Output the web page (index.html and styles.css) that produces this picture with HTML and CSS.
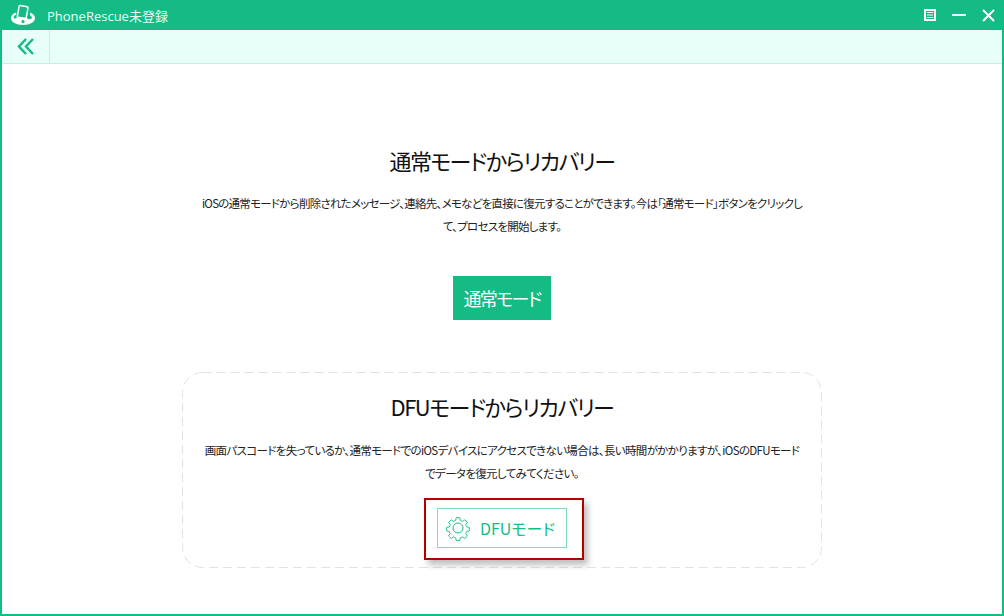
FILE: index.html
```html
<!DOCTYPE html>
<html lang="ja">
<head>
    <meta charset="UTF-8">
    <meta name="viewport" content="width=device-width, initial-scale=1.0">
    <title>PhoneRescue</title>
    <link rel="stylesheet" href="styles.css">
</head>
<body>
    <div class="window">
        <div class="titlebar">
            <div class="brand">
                <svg class="logo" width="26" height="24" viewBox="0 0 26 24">
                    <path fill="#fff" d="M6 9.500C2.800 10.600 1 12.500 1 15c0 4 5 7 12 7s12-3 12-7c0-2.600-2-4.600-5.200-5.600l.5 3.100c1 .6 1.600 1.400 1.600 2.300 0 .7-1 1.500-2.500 1.500s-2.400-.8-2.400-1.600L8 13.500c-.5 1.200-1.500 2-2.700 2-1 0-1.700-.5-1.700-1.300 0-1 1-2 2.900-2.500z"/>
                    <circle cx="13" cy="18.500" r="1.600" fill="#14bb85"/>
                    <rect x="8.200" y="3" width="9" height="13" rx="1" fill="none" stroke="#fff" stroke-width="1.500" transform="rotate(10 13 9)"/>
                </svg>
                <span class="app-name">PhoneRescue未登録</span>
            </div>
            <div class="win-controls">
                <svg width="12" height="12" viewBox="0 0 12 12"><path fill="none" stroke="#fff" stroke-width="2" d="M1 1h10v10H1z"/><path stroke="#fff" d="M3 3.500h6M3 6h6M3 8.500h6"/></svg>
                <svg width="14" height="12" viewBox="0 0 14 12"><path stroke="#fff" stroke-width="2" d="M0 6h14"/></svg>
                <svg width="13" height="13" viewBox="0 0 13 13"><path stroke="#fff" stroke-width="2" d="M1 1l11 11M12 1L1 12"/></svg>
            </div>
        </div>
        <div class="toolbar">
            <div class="back">
                <svg width="18" height="17" viewBox="0 0 18 17"><path fill="none" stroke="#14bb85" stroke-width="2.500" d="M9 1L2 8.500 9 16M16 1L9 8.500 16 16"/></svg>
            </div>
        </div>
        <div class="content">
            <section class="mode normal">
                <h2>通常モードからリカバリー</h2>
                <p>iOSの通常モードから削除されたメッセージ、連絡先、メモなどを直接に復元することができます。今は「通常モード」ボタンをクリックし<br>て、プロセスを開始します。</p>
                <button class="btn-primary">通常モード</button>
            </section>
            <section class="mode dfu">
                <h2>DFUモードからリカバリー</h2>
                <p>画面パスコードを失っているか、通常モードでのiOSデバイスにアクセスできない場合は、長い時間がかかりますが、iOSのDFUモード<br>でデータを復元してみてください。</p>
                <div class="highlight">
                    <button class="btn-outline">
                        <svg width="26" height="26" viewBox="0 0 26 26"><path fill="none" stroke="#14bb85" d="M11 1.500h4l.6 3.200 2.300 1 2.700-1.800 2.800 2.800-1.800 2.700 1 2.300 3 .6v4l-3 .6-1 2.300 1.800 2.700-2.800 2.800-2.700-1.800-2.300 1-.6 3h-4l-.6-3-2.300-1-2.700 1.800-2.800-2.800 1.800-2.700-1-2.300-3-.6v-4l3-.6 1-2.300-1.800-2.700 2.800-2.800 2.700 1.800 2.300-1z" transform="translate(1.300 1.300) scale(.9)"/><circle cx="13" cy="13" r="5" fill="none" stroke="#14bb85"/></svg>
                        <span>DFUモード</span>
                    </button>
                </div>
            </section>
        </div>
    </div>
</body>
</html>
```

FILE: styles.css
```css
/* page */
html, body {
    margin: 0;
    height: 100%;
    overflow: hidden;
}
body {
    font-family: "Noto Sans CJK JP", "Noto Sans", sans-serif;
    font-feature-settings: "palt";
    background: #fff;
    color: #222;
}

.window {
    box-sizing: border-box;
    width: 1004px;
    height: 616px;
    border: 2px solid #14bb85;
    border-top: none;
    display: flex;
    flex-direction: column;
}

/* title bar */
.titlebar {
    height: 30px;
    margin: 0 -2px;
    padding: 0 9px 0 10px;
    background: #14bb85;
    display: flex;
    align-items: center;
    justify-content: space-between;
    flex-shrink: 0;
}
.brand { display: flex; align-items: center; }
.logo { margin-right: 11px; }
.app-name { color: #e8fff9; font-family: "Open Sans", "Noto Sans CJK JP", sans-serif; font-size: 13px; }
.win-controls { display: flex; align-items: center; gap: 16px; }
.win-controls svg { display: block; }

/* toolbar */
.toolbar {
    height: 34px;
    box-sizing: border-box;
    background: #e8fff9;
    border-bottom: 1px solid #c8eee3;
    display: flex;
    flex-shrink: 0;
}
.back {
    width: 47px;
    border-right: 1px solid #c8eee3;
    display: flex;
    align-items: center;
    justify-content: center;
}

/* content */
.content {
    flex: 1;
    display: flex;
    flex-direction: column;
    align-items: center;
}
.mode { display: flex; flex-direction: column; align-items: center; text-align: center; }
.mode h2 { margin: 0; font-size: 22px; font-weight: 400; line-height: 32px; letter-spacing: -1.500px; color: #111; }
.mode p { margin: 0; font-size: 11.500px; line-height: 23px; white-space: nowrap; color: #222; }

.normal { margin-top: 80px; }
.normal h2 { margin-bottom: 16px; }
.normal p { margin-bottom: 38px; letter-spacing: -.74px; }
.btn-primary {
    width: 98px;
    height: 44px;
    border: none;
    padding: 0;
    background: #14bb85;
    color: #fff;
    font: inherit;
    font-size: 18px;
    letter-spacing: -1.600px;
}

.dfu {
    box-sizing: border-box;
    width: 640px;
    height: 196px;
    margin-top: 52px;
    padding-top: 20px;
    background: url("data:image/svg+xml,%3Csvg xmlns='http://www.w3.org/2000/svg' width='640' height='196'%3E%3Crect x='.5' y='.5' width='639' height='195' rx='20' fill='none' stroke='%23e2e2e2' stroke-dasharray='9 5'/%3E%3C/svg%3E") no-repeat;
}
.dfu h2 { margin-top: -2px; margin-bottom: 17px; }
.dfu p { margin-bottom: 0; letter-spacing: -.66px; }

.highlight {
    box-sizing: border-box;
    width: 160px;
    height: 62px;
    margin-top: 13px;
    margin-left: 4px;
    padding: 0 0 2px 11px;
    border: 2px solid #b40000;
    box-shadow: 4px 5px 6px rgba(0, 0, 0, .25);
    display: flex;
    align-items: center;
    background: #fff;
}
.btn-outline {
    box-sizing: border-box;
    width: 130px;
    height: 40px;
    padding: 0 0 0 7px;
    border: 1px solid #7fdcbc;
    background: #fff;
    color: #14bb85;
    font: inherit;
    font-size: 16px;
    display: flex;
    align-items: center;
    gap: 9px;
}
```
